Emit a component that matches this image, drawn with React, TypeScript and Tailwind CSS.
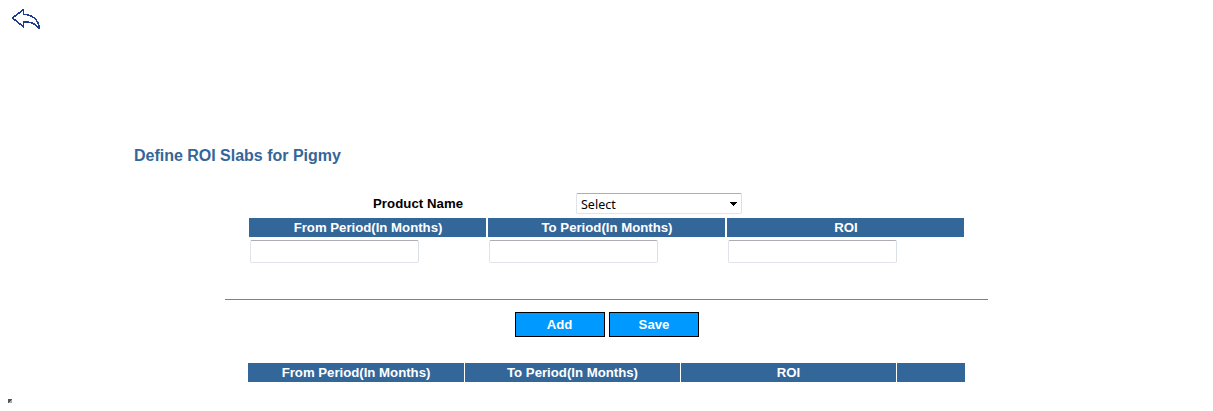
import React from "react";

const headings = ["From Period(In Months)", "To Period(In Months)", "ROI"];
const fieldBorder =
  "block rounded-[2px] border border-[#e2e3ea] border-t-[#abadb3] border-r-[#dbdfe6] bg-white outline-none";

export default function App() {
  return (
    <div className="flex h-[411px] w-[1213px] flex-col overflow-hidden bg-white font-['Liberation_Sans',Arial,sans-serif] text-[13.2px] leading-[19px] font-bold text-black">
      <header className="h-[146px] pt-2 pl-[11px]">
        <svg width="31" height="23" viewBox="0 0 31 23" fill="none" stroke="#1c3c8c" strokeWidth="1.5" strokeLinejoin="miter" shapeRendering="crispEdges">
          <path d="M1.5 10 L12.5 1.5 V6.4 C20 6.4 27 10.5 28.5 20 H27.5 C25 16 20 13.8 12.5 13.8 V18.8 Z" />
        </svg>
      </header>

      <h1 className="h-[47px] pl-[134px] text-[16px] leading-[19px] tracking-[-0.01px] text-[#336699]">Define ROI Slabs for Pigmy</h1>

      <main className="flex flex-col">
        <div className="flex h-[25px] pl-[373px]">
          <label htmlFor="product" className="w-[203px] pt-px tracking-[0.06px]">Product Name</label>
          <div id="product" className={`${fieldBorder} flex! h-[21px] w-[166px] items-center justify-between pr-[4px] pl-[4px] pt-[2px] font-['Noto_Sans','Open_Sans',sans-serif] text-[12.5px] leading-[18px] font-normal`}>
            <span>Select</span>
            <svg width="7" height="4" viewBox="0 0 7 4" className="mb-[2px]" shapeRendering="crispEdges">
              <path d="M0 0H7V1H6V2H5V3H4V4H3V3H2V2H1V1H0Z" fill="#000" />
            </svg>
          </div>
        </div>

        <div className="ml-[249px] grid w-[715px] grid-cols-3 gap-x-[2px]">
          {headings.map((heading) => (
            <div key={heading}>
              <div className="h-[19px] bg-[#336699] pl-px text-center text-white">{heading}</div>
              <input aria-label={heading} className={`${fieldBorder} mt-[3px] ml-px h-[23px] w-[169px] px-1`} />
            </div>
          ))}
        </div>

        <div className="mt-9 ml-[225px] h-px w-[763px] bg-[#808080]" />

        <div className="mt-3 ml-[515px] flex gap-1">
          <button className="h-[25px] w-[90px] border border-black bg-[#0099ff] pr-px text-white">Add</button>
          <button className="h-[25px] w-[90px] border border-black bg-[#0099ff] text-white">Save</button>
        </div>

        <div className="mt-[26px] ml-[248px] grid h-[19px] w-[717px] grid-cols-[216px_215px_215px_68px] gap-x-px text-center text-white">
          {headings.map((heading) => (
            <div key={heading} className="bg-[#336699]">{heading}</div>
          ))}
          <div className="bg-[#336699]" />
        </div>
      </main>

      <footer className="pt-[17px] pl-2">
        <svg width="4" height="4" viewBox="0 0 4 4" shapeRendering="crispEdges">
          <path d="M0 0H4V4H0Z" fill="#aaa" />
          <path d="M0 0H4V1H3V2H2V3H1V4H0Z" fill="#555" />
        </svg>
      </footer>
    </div>
  );
}
